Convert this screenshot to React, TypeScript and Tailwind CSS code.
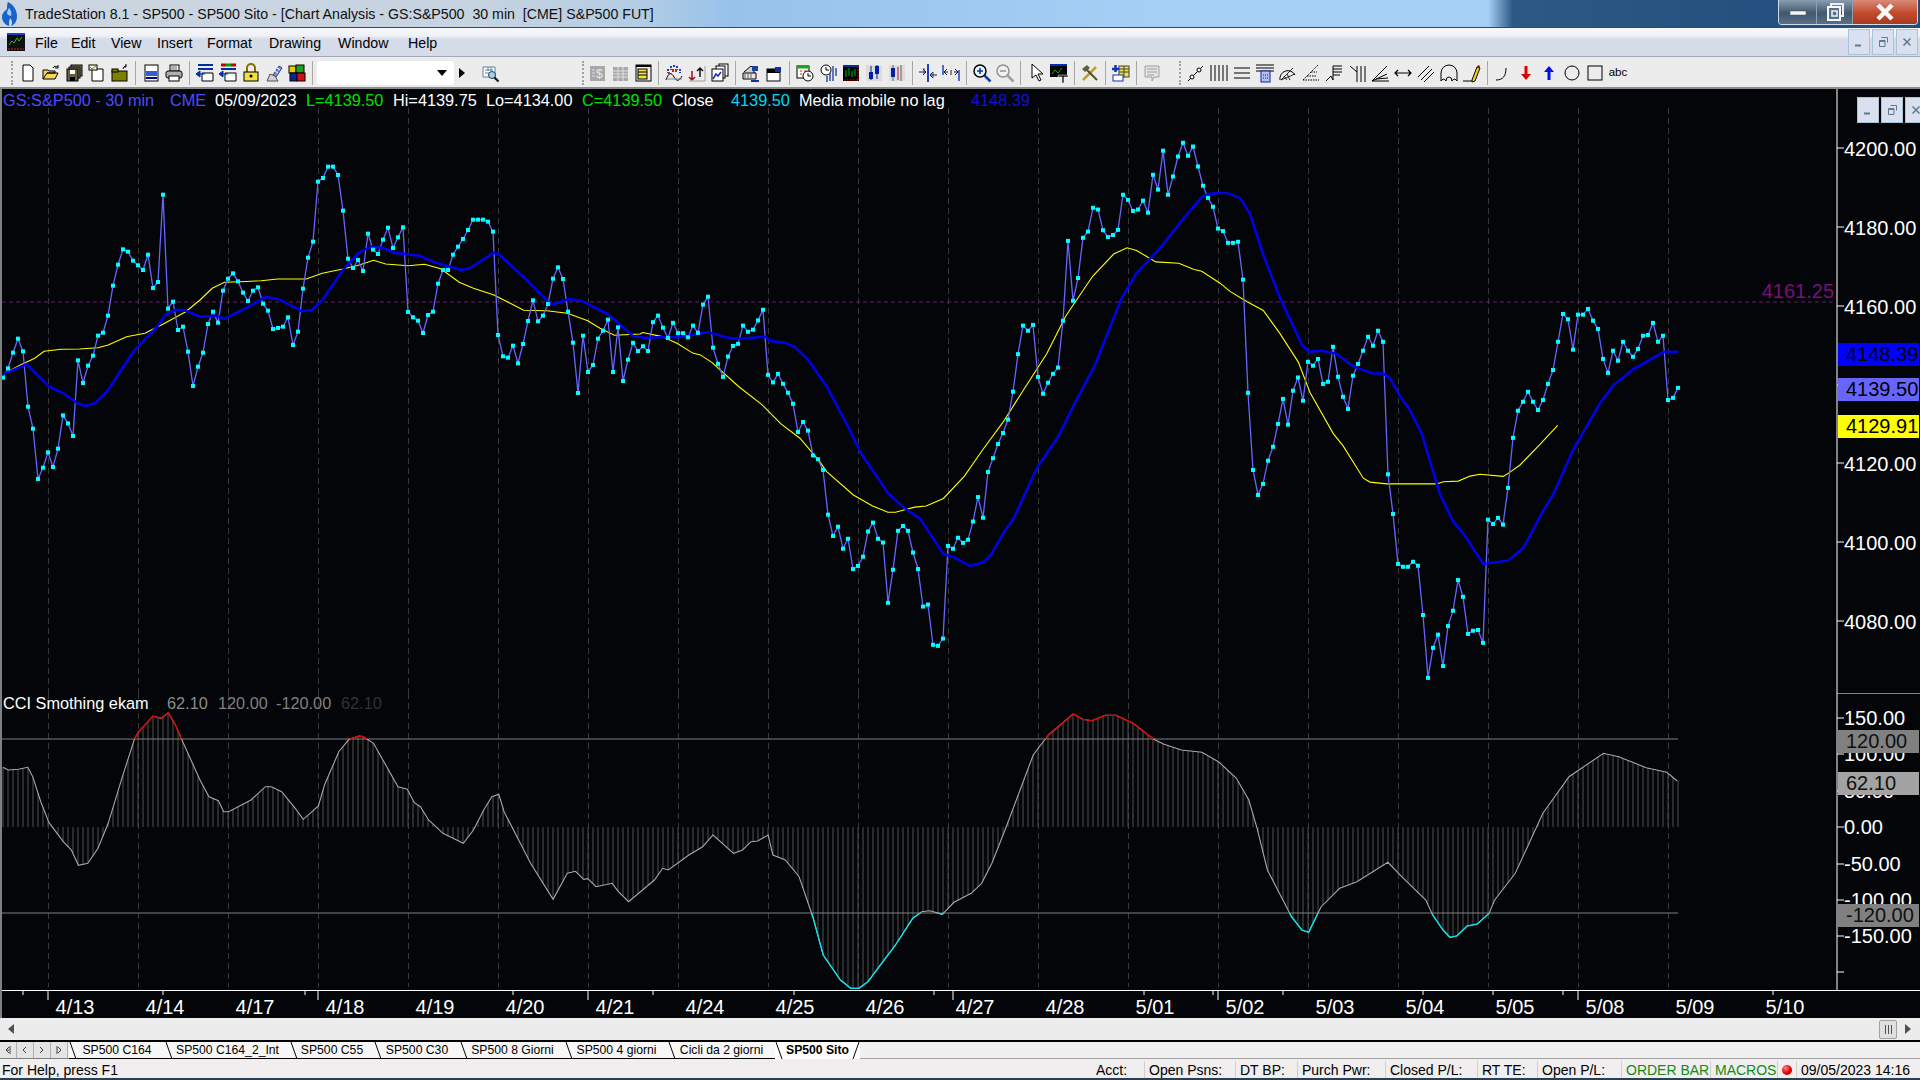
import React from "react";

const seriesA = [773,745,698,656,694,860,926,1077,1043,997,1041,986,886,910,948,721,789,737,707,647,638,587,497,434,388,395,422,436,450,404,504,486,224,566,545,630,620,695,798,740,698,612,575,608,512,476,460,484,518,543,512,502,551,572,627,624,620,592,675,635,506,413,365,185,174,140,140,165,272,416,444,420,453,341,389,402,359,323,384,352,322,576,592,602,639,585,575,491,450,450,404,380,357,330,299,299,299,305,335,645,709,713,677,730,672,603,541,604,587,552,476,442,477,575,668,819,647,756,735,656,632,599,756,622];
const seriesB = [729,667,618,642,628,642,558,539,574,604,560,590,590,602,568,589,507,484,632,679,717,658,627,621,568,586,580,553,522,711,733,708,737,763,795,877,848,873,945,956,987,1117,1179,1152,1216,1187,1275,1266,1239,1166,1140,1187,1198,1373,1277,1164,1150,1164,1227,1275,1384,1378,1495,1498,1477,1208,1216,1184,1199,1190,1137,1066,1126,993,953,912,880,841,760,651,568,583,566,717,766,734,708,690,554,322,496,430,313,295,226,231,291,311,305,290,188,203,235,231,205,240,130,173,60,188,135,77,37,75,48,106];
const seriesC = [156,190,215,276,283,316,316,313,419,736,952,1022,991,926,887,823,753,825,730,693,758,649,660,641,711,705,607,691,747,781,688,655,618,579,604,562,593,964,1075,1215,1223,1223,1209,1220,1358,1534,1450,1413,1501,1389,1346,1260,1307,1411,1402,1400,1436,1091,1103,1086,1105,1002,862,786,761,733,761,784,756,711,672,593,515,530,615,517,517,501,534,557,641,680,618,646,593,618,635,613,576,574,540,593,576,756,750,722];

const priceY = [
  ...seriesA.map((z) => 120 + z / 3),
  ...seriesB.map((z) => 130 + z / 2.904),
  ...seriesC.map((z) => 130 + z / 2.8),
];
const priceX = priceY.map((_, i) => 3 + 5 * i);
const pricePts = priceY.map((y, i) => `${priceX[i]},${y.toFixed(1)}`).join(" ");

type Pt = [number, number];

// flat list of x,y read off a crop -> real page coordinates
const crop = (flat: number[], ox: number, oy: number, sx: number, sy: number): Pt[] => {
  const out: Pt[] = [];
  for (let i = 0; i < flat.length; i += 2) out.push([ox + flat[i] / sx, oy + flat[i + 1] / sy]);
  return out;
};

const merge = (...parts: Pt[][]): Pt[] => {
  const out: Pt[] = [];
  parts.forEach((p) =>
    p.forEach((pt) => {
      if (!out.length || pt[0] > out[out.length - 1][0]) out.push(pt);
    })
  );
  return out;
};

const toAttr = (pts: Pt[]) => pts.map(([x, y]) => `${x.toFixed(1)},${y.toFixed(1)}`).join(" ");

const yellow = merge(
  crop([7,763,50,735,85,715,108,694,150,688,195,687,240,683,265,675,310,650,355,640,400,612,455,575,490,540,520,505,550,487,590,485,640,482,680,477,750,477,790,460,840,447,880,435,915,421,945,432,1000,437,1040,433,1080,446,1125,487,1160,505,1210,525,1250,550,1283,571,1340,572,1390,580,1440,602,1470,625,1505,646,1568,642], 0, 120, 2.45, 3),
  crop([60,588,110,600,150,620,190,648,210,653,240,675,310,745,370,797,420,853,470,895,520,960,540,992,610,1060,660,1092,700,1110,720,1110,770,1095,800,1092,845,1070,900,1005,950,925,1000,850,1060,745,1115,650,1165,540,1235,425,1290,360,1325,342,1350,350,1400,383,1460,387,1500,405,1520,410,1568,445], 620, 130, 2.613, 2.904),
  crop([40,420,90,452,140,480,190,505,240,570,295,650,330,735,400,850,430,885,490,975,510,986,560,991,650,991,710,991,730,985,775,983,810,969,840,964,910,970,930,958,960,938,1020,880,1073,827], 1200, 130, 3, 2.8)
);

const blue = merge(
  crop([7,763,65,733,120,800,155,820,190,850,210,858,235,848,265,810,305,735,330,690,350,665,385,620,405,585,430,570,450,570,490,590,530,587,550,596,605,563,650,531,680,536,740,574,765,570,790,540,840,450,880,397,910,380,940,384,965,398,1030,408,1060,425,1130,450,1150,445,1210,398,1225,405,1290,480,1345,548,1355,553,1395,537,1425,543,1490,583,1550,648,1568,650], 0, 120, 2.45, 3),
  crop([60,604,100,602,160,601,230,587,280,603,310,607,380,600,390,612,430,618,455,628,490,665,540,745,600,870,630,940,680,1020,700,1055,740,1095,785,1130,845,1232,870,1240,915,1266,950,1255,970,1232,1005,1165,1030,1125,1090,980,1145,890,1190,790,1240,685,1310,490,1350,415,1410,345,1470,260,1520,195,1540,185,1568,183], 620, 130, 2.613, 2.904),
  crop([25,178,80,176,120,190,150,235,190,350,240,470,305,600,325,621,365,618,410,627,460,662,520,682,550,682,570,695,600,745,630,785,665,850,720,1020,760,1097,790,1130,850,1215,925,1205,970,1170,1030,1065,1060,1020,1120,895,1200,765,1240,715,1300,670,1390,622,1435,621], 1200, 130, 3, 2.8)
);

const cci = merge(
  crop([7,262,20,270,45,268,68,262,80,290,100,365,120,428,155,485,175,510,192,556,215,550,240,505,265,430,300,290,330,175,340,155,375,108,395,115,412,98,430,135,445,178,490,300,512,350,535,362,548,395,560,395,615,360,650,320,665,320,690,335,720,380,743,418,780,378,795,315,830,215,855,178,880,168,890,170,900,178,915,190,975,320,998,328,1015,368,1030,380,1050,420,1085,460,1135,490,1160,450,1185,390,1205,350,1222,343,1235,395,1300,550,1355,658,1390,580,1410,574,1430,598,1440,596,1460,620,1500,610,1515,635,1540,665], 0, 680, 2.45, 3),
  crop([50,540,62,505,70,510,100,465,120,440,135,405,165,460,178,450,190,425,200,423,215,405,222,465,240,480,260,530,280,650,295,765,320,840,335,865,347,865,360,845,400,735,425,655,438,635,450,632,468,643,485,607,510,580,525,550,540,490,560,385,600,165,622,105,658,42,672,58,685,62,705,46,720,46,745,70,775,118,790,133,815,150,845,157,870,187,895,235,913,300,925,385,940,510,975,650,990,690,1000,697,1018,620,1045,565,1070,545,1115,487,1135,530,1170,600,1180,645,1195,690,1205,712,1215,708,1230,678,1245,672,1262,640,1270,600,1300,520,1340,340,1378,230,1428,160,1450,170,1490,203,1520,217,1535,243], 620, 700, 1.452, 3)
);

const cciAt = (x: number) => {
  for (let i = 1; i < cci.length; i++) {
    if (x <= cci[i][0]) {
      const [x0, y0] = cci[i - 1];
      const [x1, y1] = cci[i];
      return y0 + ((y1 - y0) * (x - x0)) / (x1 - x0);
    }
  }
  return cci[cci.length - 1][1];
};

const gridX = Array.from({ length: 19 }, (_, i) => 48.5 + 90 * i);
const days = ["4/13","4/14","4/17","4/18","4/19","4/20","4/21","4/24","4/25","4/26","4/27","4/28","5/01","5/02","5/03","5/04","5/05","5/08","5/09","5/10"];

const priceTicks = [
  { y: 148, t: "4200.00" },
  { y: 227, t: "4180.00" },
  { y: 306, t: "4160.00" },
  { y: 385, t: "" },
  { y: 463, t: "4120.00" },
  { y: 542, t: "4100.00" },
  { y: 621, t: "4080.00" },
];
const flags = [
  { y: 343, t: "4148.39", bg: "#0000ff" },
  { y: 378, t: "4139.50", bg: "#6666ff" },
  { y: 415, t: "4129.91", bg: "#ffff00" },
];
const cciTicks = [
  { y: 718, t: "150.00" },
  { y: 754, t: "100.00" },
  { y: 791, t: "50.00" },
  { y: 827, t: "0.00" },
  { y: 864, t: "-50.00" },
  { y: 900, t: "-100.00" },
  { y: 936, t: "-150.00" },
  { y: 972, t: "" },
];
const cciFlags = [
  { y: 730, t: "120.00", bg: "#808080" },
  { y: 772, t: "62.10", bg: "#a3a3a3" },
  { y: 904, t: "-120.00", bg: "#808080" },
];

const smallTicks = [23, 163, 305, 513, 653, 794, 934, 1144, 1213, 1283, 1423, 1493, 1563, 1773];
const longTicks = [48, 318, 588, 953, 1218, 1578];

const SVGFONT = "'Liberation Sans', Arial, sans-serif";

const icons: Record<string, React.ReactNode> = {
  newDoc: <path d="M5 2h7l3 3v13H5z" fill="#fff" stroke="#000" />,
  open: (
    <>
      <path d="M2 16V7h5l1 1h6v2H6l-4 6h12l3-6H6" fill="#f5d860" stroke="#000" />
      <path d="M12 5c1-2 3-2 5-1M17 2v3h-3" fill="none" stroke="#000" />
    </>
  ),
  saveAll: (
    <>
      <rect x="7" y="2" width="11" height="11" fill="#808060" stroke="#000" />
      <rect x="5" y="4" width="11" height="11" fill="#808060" stroke="#000" />
      <rect x="3" y="6" width="11" height="12" fill="#606040" stroke="#000" />
      <rect x="6" y="7" width="5" height="4" fill="#fff" />
      <rect x="6" y="14" width="5" height="4" fill="#000" />
    </>
  ),
  docCheck: (
    <>
      <path d="M5 6h11v12H5z" fill="#fff" stroke="#000" />
      <rect x="2" y="2" width="8" height="5" fill="#ffe" stroke="#000" />
      <path d="M3 4l2 2 4-3" fill="none" stroke="#808000" />
    </>
  ),
  oliveBox: (
    <>
      <rect x="2" y="8" width="15" height="10" fill="#808000" stroke="#000" />
      <rect x="2" y="6" width="6" height="3" fill="#808000" stroke="#000" />
      <path d="M13 6c0-2 2-3 3-3M16 1v3h-2" fill="none" stroke="#000" />
    </>
  ),
  preview: (
    <>
      <rect x="4" y="2" width="13" height="16" fill="#fff" stroke="#000" />
      <rect x="5" y="8" width="11" height="5" fill="#3060d0" />
      <path d="M5 15h11" stroke="#000080" strokeWidth="2" />
    </>
  ),
  printer: (
    <>
      <rect x="6" y="2" width="9" height="6" fill="#fff" stroke="#000" />
      <rect x="2" y="8" width="16" height="7" rx="2" fill="#b0b0b0" stroke="#000" />
      <rect x="5" y="13" width="10" height="5" fill="#fff" stroke="#000" />
      <path d="M7 4h6M7 6h6" stroke="#666" />
    </>
  ),
  winA: (
    <>
      <path d="M3 2h15M3 6h15" stroke="#0030a0" strokeWidth="2" />
      <path d="M7 10h11v8H7z" fill="#fff" stroke="#000" />
      <path d="M1 11l4-3v6zM5 11h5" fill="#0030a0" stroke="#0030a0" />
    </>
  ),
  winB: (
    <>
      <path d="M3 2h5" stroke="#d00000" strokeWidth="3" />
      <path d="M8 2h5" stroke="#00a000" strokeWidth="3" />
      <path d="M13 2h5" stroke="#d00000" strokeWidth="3" />
      <path d="M3 6h15" stroke="#0030a0" strokeWidth="2" />
      <path d="M7 10h11v8H7z" fill="#fff" stroke="#000" />
      <path d="M1 11l4-3v6zM5 11h5" fill="#0030a0" stroke="#0030a0" />
    </>
  ),
  lock: (
    <>
      <path d="M6 9V5a4 4 0 018 0v4" fill="none" stroke="#807000" strokeWidth="2" />
      <rect x="3" y="9" width="14" height="9" fill="#f0e040" stroke="#000" />
      <circle cx="10" cy="13" r="1.5" fill="#000" />
    </>
  ),
  hatch: (
    <>
      <path d="M9 12l6-9 3 2-6 9z" fill="#8090d0" stroke="#304090" />
      <path d="M3 18l3-7 5 2 3 5z" fill="#d0d0d0" stroke="#505050" />
      <path d="M11 8l3 2M13 5l3 2" stroke="#fff" />
    </>
  ),
  cubes: (
    <>
      <rect x="2" y="3" width="7" height="7" fill="#e8d000" stroke="#000" />
      <rect x="9" y="2" width="8" height="8" fill="#20a020" stroke="#000" />
      <rect x="3" y="10" width="7" height="8" fill="#1020a0" stroke="#000" />
      <rect x="10" y="10" width="8" height="8" fill="#d01010" stroke="#000" />
    </>
  ),
  finder: (
    <>
      <path d="M3 4h12v10H3z" fill="#fff" stroke="#6080a0" />
      <path d="M5 7h8M5 10h5M8 4v4M11 4v4" stroke="#6080a0" />
      <circle cx="12" cy="12" r="3.5" fill="#a0d0f0" stroke="#304050" />
      <path d="M14.5 14.5l4 4" stroke="#000" strokeWidth="2" />
    </>
  ),
  grayCalc: (
    <>
      <rect x="3" y="3" width="15" height="15" fill="#a8a8a8" />
      <path d="M5 7h3M5 10h3M5 13h3" stroke="#e0e0e0" />
      <text x="9" y="15" fontSize="12" fontFamily={SVGFONT} fill="#e8e8e8">$</text>
    </>
  ),
  grayTable: (
    <>
      <rect x="3" y="4" width="15" height="14" fill="#a8a8a8" />
      <path d="M3 8h15M3 11h15M3 14h15M8 4v14M13 4v14" stroke="#e0e0e0" />
    </>
  ),
  yellowTable: (
    <>
      <rect x="3" y="2" width="15" height="16" fill="#f0f0f0" stroke="#000" />
      <rect x="5" y="6" width="9" height="10" fill="#f0e050" stroke="#000" />
      <path d="M5 9h9M5 12h9" stroke="#000" />
      <path d="M3 3h15" stroke="#000" strokeWidth="2" />
    </>
  ),
  wave: (
    <>
      <path d="M2 17c3-8 5-8 8-3s5 4 8-1" fill="none" stroke="#000" />
      <path d="M2 16h16" stroke="#808080" />
      <path d="M4 6v4M7 3v4M10 2v3M13 3v4M16 6v4" stroke="#2040d0" strokeWidth="2" strokeDasharray="2 1" />
      <path d="M5 9v2M9 6v3M12 6v3" stroke="#d02020" strokeWidth="2" />
    </>
  ),
  arrows: (
    <>
      <path d="M5 8v9M2 14l3 3 3-3" fill="none" stroke="#a01010" strokeWidth="1.5" />
      <path d="M13 14V5M10 8l3-3 3 3" fill="none" stroke="#101010" strokeWidth="1.5" />
      <path d="M2 18h16M18 3v15" stroke="#a0a0a0" />
    </>
  ),
  stack: (
    <>
      <rect x="9" y="1" width="9" height="12" fill="#fff" stroke="#000" />
      <rect x="6" y="3" width="9" height="12" fill="#fff" stroke="#000" />
      <rect x="2" y="6" width="11" height="12" fill="#fff" stroke="#000" />
      <path d="M3 16l3-5 2 2 3-4" fill="none" stroke="#1030c0" strokeWidth="1.5" />
    </>
  ),
  chartUp: (
    <>
      <path d="M3 9l7-6 3 3v4" fill="#d0d0d0" stroke="#000" />
      <path d="M2 10h13v6H2z" fill="#e8e8e8" stroke="#000" />
      <path d="M4 10v5M7 10v5M10 10v5" stroke="#606060" />
      <path d="M11 3h6v5h-6z" fill="#2040a0" />
      <path d="M10 18h8" stroke="#1030a0" strokeWidth="2" />
    </>
  ),
  winUp: (
    <>
      <rect x="3" y="6" width="13" height="12" fill="#fff" stroke="#000" />
      <path d="M3 8h13" stroke="#000" strokeWidth="4" />
      <path d="M11 4h6v5h-6z" fill="#1030a0" />
    </>
  ),
  calClock: (
    <>
      <rect x="2" y="3" width="12" height="12" fill="#fff" stroke="#000" />
      <path d="M2 4h12" stroke="#20a020" strokeWidth="3" />
      <path d="M5 8h2M9 8h2M5 11h2" stroke="#d02020" />
      <circle cx="13" cy="13" r="5" fill="#fff" stroke="#000" />
      <path d="M13 10v3h3" fill="none" stroke="#000" />
    </>
  ),
  clockBars: (
    <>
      <circle cx="8" cy="7" r="5" fill="#fff" stroke="#000" />
      <path d="M8 4v3h3" fill="none" stroke="#000" />
      <path d="M15 3v15M18 5v8M9 13v6M12 10v8" stroke="#3050a0" strokeWidth="1.5" />
    </>
  ),
  blackChart: (
    <>
      <rect x="2" y="2" width="16" height="16" fill="#000" />
      <path d="M5 7v7M8 5v8M11 8v6M14 6v7" stroke="#00c000" />
      <path d="M2 3h16" stroke="#0030a0" strokeWidth="2" />
      <path d="M17 3v15M3 17h15" stroke="#e00000" strokeDasharray="2 1" />
    </>
  ),
  candles: (
    <>
      <rect x="2" y="2" width="16" height="16" fill="#dcdcdc" />
      <path d="M7 3v14M13 2v14" stroke="#0020a0" />
      <rect x="5" y="9" width="4" height="7" fill="#0020a0" />
      <rect x="11" y="3" width="4" height="8" fill="#0020a0" />
    </>
  ),
  bars: (
    <>
      <rect x="2" y="2" width="16" height="16" fill="#dcdcdc" />
      <path d="M6 2v16M14 2v16" stroke="#606060" />
      <rect x="4" y="5" width="4" height="9" fill="#0020a0" />
      <path d="M11 4v13" stroke="#c01010" />
    </>
  ),
  arrowIn: (
    <>
      <path d="M10 1v18" stroke="#2040c0" strokeWidth="2" />
      <path d="M1 9h7M5 6l3 3-3 3M19 12h-7M15 9l-3 3 3 3" fill="none" stroke="#202020" />
      <path d="M6 5v6M15 9v6" stroke="#2040c0" />
    </>
  ),
  arrowOut: (
    <>
      <path d="M2 2v10M18 7v11" stroke="#2040c0" strokeWidth="1.5" />
      <path d="M3 9h4M6 6l-3 3 3 3M17 9h-4M14 6l3 3-3 3" fill="none" stroke="#202020" />
      <path d="M10 7v5" stroke="#202020" />
    </>
  ),
  zoomIn: (
    <>
      <circle cx="8" cy="8" r="6" fill="#e8f4ff" stroke="#000" strokeWidth="1.5" />
      <path d="M5 8h6M8 5v6" stroke="#1030a0" strokeWidth="1.5" />
      <path d="M12.5 12.5l6 6" stroke="#1040a0" strokeWidth="2.5" />
    </>
  ),
  zoomOut: (
    <>
      <circle cx="8" cy="8" r="6" fill="#f0f0f0" stroke="#909090" strokeWidth="1.5" />
      <path d="M5 8h6" stroke="#909090" strokeWidth="1.5" />
      <path d="M12.5 12.5l6 6" stroke="#a0a0a0" strokeWidth="2.5" />
    </>
  ),
  cursor: <path d="M6 1v14l4-3 3 6 2-1-3-6h5z" fill="#fff" stroke="#000" />,
  textChart: (
    <>
      <rect x="1" y="1" width="17" height="13" fill="#000" />
      <path d="M1 2h17" stroke="#0030c0" strokeWidth="2" />
      <path d="M3 11l3-4 3 3 4-5" fill="none" stroke="#00c000" />
      <path d="M9 12h10v2h-4v6h-2v-6H9z" fill="#202020" stroke="#fff" strokeWidth=".5" />
    </>
  ),
  tools: (
    <>
      <path d="M3 17L16 4" stroke="#c0a020" strokeWidth="2.5" />
      <path d="M17 17L5 5" stroke="#505030" strokeWidth="2" />
      <path d="M2 6l5-4 3 3-5 4z" fill="#606040" />
    </>
  ),
  plusTable: (
    <>
      <rect x="8" y="3" width="10" height="11" fill="#f0e050" stroke="#404040" />
      <path d="M8 6h10M8 9h10M13 3v11" stroke="#404040" />
      <path d="M1 6h7M4.500 2v7" stroke="#1030c0" strokeWidth="2.500" />
      <rect x="2" y="12" width="10" height="6" fill="#fff" stroke="#1030a0" />
    </>
  ),
  grayNote: (
    <>
      <path d="M3 3h14v11h-5l-2 4v-4H3z" fill="#e4e4e4" stroke="#a0a0a0" />
      <path d="M5 6h10M5 9h10M5 12h7" stroke="#a0a0a0" />
    </>
  ),
  trend: (
    <>
      <path d="M2 18L17 3" stroke="#000" />
      <circle cx="6" cy="14" r="2" fill="#fff" stroke="#000" />
      <circle cx="13" cy="7" r="2" fill="#fff" stroke="#000" />
    </>
  ),
  vlines: <path d="M2 2v16M6 2v16M10 2v16M14 2v16M18 2v16" stroke="#000" />,
  hlines: <path d="M2 5h16M2 10h16M2 15h16" stroke="#000" />,
  calcLines: (
    <>
      <path d="M1 2h18M1 5h18M1 8h18" stroke="#000" />
      <rect x="6" y="8" width="9" height="11" fill="#b0c0f0" stroke="#1020a0" />
      <path d="M8 12h5M8 15h5" stroke="#1020a0" strokeDasharray="1 1" />
    </>
  ),
  arcFan: (
    <>
      <path d="M2 17a8 8 0 0115-5" fill="none" stroke="#000" />
      <path d="M3 17L15 5M3 17l14-6M6 13l3 4M9 11l3 6" stroke="#000" strokeWidth=".8" />
    </>
  ),
  dotTri: (
    <>
      <path d="M2 17L17 2" stroke="#000" strokeDasharray="1.500 1" />
      <path d="M2 17h16M6 13h10M10 9h6" stroke="#000" strokeDasharray="1.500 1" />
    </>
  ),
  steps: (
    <>
      <path d="M2 18l5-5 2 4" fill="none" stroke="#000" />
      <path d="M9 17V3M9 3h9M9 6h9M9 9h9M9 12h7" stroke="#000" />
    </>
  ),
  vfan: <path d="M3 3l7 6M10 3v16M14 3v16M18 3v16" stroke="#000" />,
  angle: (
    <>
      <path d="M2 18L17 3M2 18h17M2 18l15-7M6 16l12-1" stroke="#000" />
    </>
  ),
  measure: <path d="M2 10h16M5 7l-3 3 3 3M15 7l3 3-3 3" fill="none" stroke="#000" strokeWidth="1.200" />,
  parallel: <path d="M2 14L13 3M5 17L16 6M8 19L18 9" stroke="#000" />,
  dome: (
    <>
      <path d="M2 18V10a8 8 0 0116 0v8" fill="none" stroke="#000" />
      <path d="M2 18a3 4 0 015 0a3 4 0 016 0a3 4 0 015 0" fill="none" stroke="#000" />
    </>
  ),
  pencil: (
    <>
      <path d="M1 18h9" stroke="#000" />
      <path d="M10 17l5-13 3 1-5 13-3 1z" fill="#f0d020" stroke="#000" />
      <path d="M15 4l1-2 2 1-.500 2z" fill="#a01010" />
    </>
  ),
  curve: <path d="M3 17c7 0 10-4 10-12" fill="none" stroke="#000" />,
  arrowDown: <path d="M8.500 3h3v8H15l-5 6-5-6h3.500z" fill="#e00000" />,
  arrowUp: <path d="M8.500 17h3V9H15l-5-6-5 6h3.500z" fill="#0010f0" />,
  circle: <circle cx="10" cy="10" r="7" fill="none" stroke="#000" />,
  square: <rect x="3" y="3" width="14" height="14" fill="none" stroke="#000" />,
};

const Icon = ({ name }: { name: string }) => (
  <div className="flex h-[23px] w-[23px] shrink-0 items-center justify-center">
    <svg viewBox="0 0 20 20" className="h-[20px] w-[20px]">
      {icons[name]}
    </svg>
  </div>
);

const Sep = () => (
  <div className="flex w-[8px] shrink-0 justify-center">
    <div className="h-[24px] w-px bg-[#a8a8a8]" />
  </div>
);

const Grip = ({ className }: { className: string }) => (
  <div className={`h-[24px] w-[2px] shrink-0 border-l-2 border-dotted border-[#a0a0a0] ${className}`} />
);

const Group = ({ items }: { items: string[] }) => (
  <>
    {items.map((n) => (
      <Icon key={n} name={n} />
    ))}
  </>
);

const WinBtn = ({ kind }: { kind: "min" | "max" | "close" }) => (
  <div className="flex h-[26px] w-[22px] shrink-0 items-center justify-center border border-[#a9c4da] bg-[#d9e1f1]">
    <svg viewBox="0 0 12 12" className="h-[12px] w-[12px]">
      {kind === "min" && <path d="M2 9.500h6" stroke="#607890" strokeWidth="2" />}
      {kind === "max" && (
        <path d="M4.500 1.500h6v5M2.500 4.500h5.500v6H2.500zM2.500 5.500h5.500" fill="none" stroke="#607890" />
      )}
      {kind === "close" && <path d="M2.500 2.500l7 7M9.500 2.500l-7 7" stroke="#607890" strokeWidth="1.500" />}
    </svg>
  </div>
);

const tabs = [
  { t: "SP500 C164", w: "w-[96px]" },
  { t: "SP500 C164_2_Int", w: "w-[125px]" },
  { t: "SP500 C55", w: "w-[84px]" },
  { t: "SP500 C30", w: "w-[86px]" },
  { t: "SP500 8 Giorni", w: "w-[105px]" },
  { t: "SP500 4 giorni", w: "w-[103px]" },
  { t: "Cicli da 2 giorni", w: "w-[107px]" },
];

const status = [
  { t: "Open Psns:", w: "w-[91px]", c: "" },
  { t: "DT BP:", w: "w-[62px]", c: "" },
  { t: "Purch Pwr:", w: "w-[88px]", c: "" },
  { t: "Closed P/L:", w: "w-[92px]", c: "" },
  { t: "RT TE:", w: "w-[60px]", c: "" },
  { t: "Open P/L:", w: "w-[84px]", c: "" },
  { t: "ORDER BAR", w: "w-[89px]", c: "text-[#158a15]" },
  { t: "MACROS", w: "w-[67px]", c: "text-[#158a15]" },
];

export default function App() {
  return (
    <div className="flex h-[1080px] w-[1920px] flex-col overflow-hidden bg-[#f0f0f0] font-['Liberation_Sans',Arial,sans-serif] text-black">
      {/* title bar */}
      <div className="flex h-[28px] shrink-0 items-center justify-between border-b border-[#38485a] bg-[linear-gradient(90deg,#ccd6e0_0%,#c6d3e0_25%,#b4cde4_33%,#98c2ea_38%,#a6cff6_60%,#a6cff6_77.500%,#2b5884_78.800%,#204c7c_100%)]">
        <div className="flex items-center">
          <svg viewBox="0 0 18 26" className="ml-[1px] h-[26px] w-[18px]">
            <path d="M7 1c5 2 9 8 9 14s-3 9-6 10c2-3 1-6-1-8-1 3-1 5-1 8-4-1-7-5-7-9s3-6 5-8c0-3 0-5 1-7z" fill="#1a62c8" />
            <path d="M8 7c2 2 3 5 2 8-2-1-4-1-4-3s1-3 2-5z" fill="#9cd0f8" />
          </svg>
          <span className="ml-[6px] whitespace-pre pt-[2px] text-[14.200px] leading-none text-[#101010]">
            TradeStation 8.1 - SP500 - SP500 Sito - [Chart Analysis - GS:S&amp;P500  30 min  [CME] S&amp;P500 FUT]
          </span>
        </div>
        <div className="mr-[2px] flex h-[25px] self-start overflow-hidden rounded-b-[4px] border border-t-0 border-[#d0dce8]">
          <div className="flex w-[38px] items-center justify-center border-r border-[#8aa0b4] bg-[linear-gradient(180deg,#8a9cb0,#42586e_55%,#5a7088)]">
            <svg viewBox="0 0 18 10" className="w-[18px]"><rect x="1" y="4" width="16" height="4" fill="#f4f6f8" stroke="#405060" strokeWidth=".500" /></svg>
          </div>
          <div className="flex w-[36px] items-center justify-center border-r border-[#8aa0b4] bg-[linear-gradient(180deg,#8a9cb0,#42586e_55%,#5a7088)]">
            <svg viewBox="0 0 18 18" className="h-[18px] w-[18px]">
              <rect x="5" y="1" width="12" height="12" fill="none" stroke="#e8eef4" strokeWidth="2" />
              <rect x="2" y="4" width="12" height="13" fill="#5a7088" stroke="#f4f6f8" strokeWidth="2" />
              <rect x="6" y="8" width="5" height="5" fill="none" stroke="#f4f6f8" strokeWidth="1.500" />
            </svg>
          </div>
          <div className="flex w-[64px] items-center justify-center bg-[linear-gradient(180deg,#d98a78,#c24a2c_55%,#a83a20)]">
            <svg viewBox="0 0 20 18" className="h-[18px] w-[20px]">
              <path d="M3 2l14 14M17 2L3 16" stroke="#f8f8f8" strokeWidth="4.500" />
            </svg>
          </div>
        </div>
      </div>

      {/* menu */}
      <div className="flex h-[29px] shrink-0 items-center border-b border-[#a4a8b4] bg-[linear-gradient(180deg,#f7f8fb_0%,#eff1f7_28%,#d6dbea_40%,#d6dbea_100%)]">
        <svg viewBox="0 0 18 18" className="ml-[7px] h-[18px] w-[18px]">
          <rect width="18" height="18" fill="#101010" />
          <path d="M0 1h18" stroke="#2040c0" strokeWidth="2" />
          <path d="M2 12l3-4 2 2 3-5 2 3 3-4" fill="none" stroke="#20c020" />
          <path d="M1 16h16" stroke="#d02020" strokeDasharray="2 1" />
        </svg>
        <div className="ml-[10px] flex pt-[2px] text-[14.200px] leading-none">
          <span className="w-[36px]">File</span>
          <span className="w-[40px]">Edit</span>
          <span className="w-[46px]">View</span>
          <span className="w-[50px]">Insert</span>
          <span className="w-[62px]">Format</span>
          <span className="w-[69px]">Drawing</span>
          <span className="w-[70px]">Window</span>
          <span>Help</span>
        </div>
        <div className="ml-auto mr-[2px] flex gap-[2px]">
          <WinBtn kind="min" />
          <WinBtn kind="max" />
          <WinBtn kind="close" />
        </div>
      </div>

      {/* toolbar */}
      <div className="flex h-[32px] shrink-0 items-center border-b-2 border-[#8c8c8c] bg-[#ececec] pl-[11px] pt-[2px]">
        <Grip className="mr-[3.500px]" />
        <Group items={["newDoc", "open", "saveAll", "docCheck", "oliveBox"]} />
        <Sep />
        <Group items={["preview", "printer"]} />
        <Sep />
        <Group items={["winA", "winB", "lock", "hatch", "cubes"]} />
        <Sep />
        <div className="flex h-[24px] w-[137px] shrink-0 items-center justify-end rounded-[3px] bg-white pr-[7px]">
          <svg viewBox="0 0 10 6" className="w-[10px]"><path d="M0 0h10L5 6z" fill="#000" /></svg>
        </div>
        <div className="flex w-[16px] shrink-0 justify-center">
          <svg viewBox="0 0 6 10" className="h-[10px] w-[6px]"><path d="M0 0v10l6-5z" fill="#000" /></svg>
        </div>
        <div className="ml-[9px]"><Icon name="finder" /></div>
        <Grip className="ml-[80px] mr-[2px]" />
        <Group items={["grayCalc", "grayTable", "yellowTable"]} />
        <Sep />
        <Group items={["wave", "arrows", "stack"]} />
        <Sep />
        <Group items={["chartUp", "winUp"]} />
        <Sep />
        <Group items={["calClock", "clockBars", "blackChart", "candles", "bars"]} />
        <Sep />
        <Group items={["arrowIn", "arrowOut"]} />
        <Sep />
        <Group items={["zoomIn", "zoomOut"]} />
        <Sep />
        <Group items={["cursor", "textChart"]} />
        <Sep />
        <Group items={["tools"]} />
        <Sep />
        <Group items={["plusTable"]} />
        <Sep />
        <Group items={["grayNote"]} />
        <Grip className="ml-[15px] mr-[4px]" />
        <Group items={["trend", "vlines", "hlines", "calcLines", "arcFan", "dotTri", "steps", "vfan", "angle", "measure", "parallel", "dome", "pencil"]} />
        <Sep />
        <Group items={["curve", "arrowDown", "arrowUp", "circle", "square"]} />
        <span className="w-[23px] text-center text-[11.500px] leading-none">abc</span>
      </div>

      {/* chart */}
      <div className="flex h-[929px] shrink-0 flex-col overflow-hidden border-l-2 border-[#808080] bg-[#030508] text-white">
        <div className="relative h-[604px] shrink-0">
          <svg viewBox="2 89 1918 604" className="absolute inset-0 h-full w-full">
            {gridX.map((x) => (
              <line key={x} x1={x} x2={x} y1={108} y2={693} stroke="#383838" strokeDasharray="6 4" />
            ))}
            <line x1={2} x2={1836} y1={302} y2={302} stroke="#6c1a6c" strokeDasharray="4 3" />
            <text x={1834} y={298} textAnchor="end" fontSize={20} fontFamily={SVGFONT} fill="#7a107a">4161.25</text>
            <polyline points={toAttr(yellow)} fill="none" stroke="#ffff00" strokeWidth={1.100} />
            <polyline points={pricePts} fill="none" stroke="#6666ff" strokeWidth={1.300} />
            <polyline points={toAttr(blue)} fill="none" stroke="#0000f0" strokeWidth={2.500} />
            {priceY.map((y, i) => (
              <rect key={i} x={priceX[i] - 2} y={y - 2} width={4} height={4} fill="#00ffff" />
            ))}
            <line x1={1837} x2={1837} y1={89} y2={693} stroke="#fff" />
            {priceTicks.map((p) => (
              <g key={p.y}>
                <line x1={1837} x2={1844} y1={p.y} y2={p.y} stroke="#fff" />
                <text x={1844} y={p.y + 8} fontSize={20} fontFamily={SVGFONT} fill="#fff">{p.t}</text>
              </g>
            ))}
            {flags.map((f) => (
              <g key={f.y}>
                <rect x={1838} y={f.y} width={81} height={23} fill={f.bg} />
                <text x={1846} y={f.y + 18} fontSize={20} fontFamily={SVGFONT} fill="#000">{f.t}</text>
              </g>
            ))}
          </svg>
          <div className="absolute left-[1px] top-0 flex whitespace-nowrap text-[16.300px] leading-[22px]">
            <span className="w-[167px] text-[#4b4bff]">GS:S&amp;P500 - 30 min</span>
            <span className="w-[45px] text-[#4b4bff]">CME</span>
            <span className="w-[91px]">05/09/2023</span>
            <span className="w-[87px] text-[#00e000]">L=4139.50</span>
            <span className="w-[93px]">Hi=4139.75</span>
            <span className="w-[96px]">Lo=4134.00</span>
            <span className="w-[90px] text-[#00e000]">C=4139.50</span>
            <span className="w-[59px]">Close</span>
            <span className="w-[68px] text-[#00d8f0]">4139.50</span>
            <span className="w-[172px]">Media mobile no lag</span>
            <span className="text-[#1010d8]">4148.39</span>
          </div>
          <div className="absolute right-[-7px] top-[8px] flex gap-[2px]">
            <WinBtn kind="min" />
            <WinBtn kind="max" />
            <WinBtn kind="close" />
          </div>
        </div>

        <div className="relative h-[297px] shrink-0">
          <svg viewBox="2 693 1918 297" className="absolute inset-0 h-full w-full">
            <defs>
              <clipPath id="above"><rect x={0} y={693} width={1920} height={46} /></clipPath>
              <clipPath id="below"><rect x={0} y={913} width={1920} height={77} /></clipPath>
            </defs>
            {gridX.map((x) => (
              <line key={x} x1={x} x2={x} y1={693} y2={987} stroke="#383838" strokeDasharray="6 4" />
            ))}
            {priceX.map((x) => (
              <line key={x} x1={x} x2={x} y1={827} y2={cciAt(x)} stroke="#505050" />
            ))}
            <line x1={2} x2={1678} y1={739} y2={739} stroke="#808080" strokeWidth={1.200} />
            <line x1={2} x2={1678} y1={913} y2={913} stroke="#808080" strokeWidth={1.200} />
            <polyline points={toAttr(cci)} fill="none" stroke="#a8a8a8" strokeWidth={1.100} />
            <polyline points={toAttr(cci)} fill="none" stroke="#e00000" strokeWidth={1.300} clipPath="url(#above)" />
            <polyline points={toAttr(cci)} fill="none" stroke="#00e8f0" strokeWidth={1.300} clipPath="url(#below)" />
            <line x1={1837} x2={1837} y1={693} y2={990} stroke="#fff" />
            <line x1={1837} x2={1920} y1={693} y2={693} stroke="#fff" />
            {cciTicks.map((p) => (
              <g key={p.y}>
                <line x1={1837} x2={1844} y1={p.y} y2={p.y} stroke="#fff" />
                <text x={1844} y={p.y + 7} fontSize={20} fontFamily={SVGFONT} fill="#fff">{p.t}</text>
              </g>
            ))}
            {cciFlags.map((f) => (
              <g key={f.y}>
                <rect x={1838} y={f.y} width={81} height={23} fill={f.bg} />
                <text x={1846} y={f.y + 18} fontSize={20} fontFamily={SVGFONT} fill="#101010">{f.t}</text>
              </g>
            ))}
          </svg>
          <div className="absolute left-[1px] top-0 flex whitespace-nowrap text-[16.300px] leading-[20px]">
            <span className="w-[164px]">CCI Smothing ekam</span>
            <span className="w-[51px] text-[#8c8c8c]">62.10</span>
            <span className="w-[58px] text-[#808080]">120.00</span>
            <span className="w-[65px] text-[#808080]">-120.00</span>
            <span className="text-[#333333]">62.10</span>
          </div>
        </div>

        <div className="relative h-[28px] shrink-0 border-t border-white">
          <svg viewBox="2 991 1918 27" className="absolute inset-0 h-full w-full">
            {smallTicks.map((x) => (
              <line key={x} x1={x} x2={x} y1={991} y2={995} stroke="#fff" />
            ))}
            {longTicks.map((x) => (
              <line key={x} x1={x} x2={x} y1={991} y2={1000} stroke="#fff" />
            ))}
          </svg>
          <div className="relative flex pl-[28px] pt-[5px] text-[20px] leading-[22px]">
            {days.map((d) => (
              <span key={d} className="w-[90px] text-center">{d}</span>
            ))}
          </div>
        </div>
      </div>

      {/* scroll bar */}
      <div className="flex h-[22px] shrink-0 items-center justify-between bg-[#ececec]">
        <svg viewBox="0 0 6 10" className="ml-[8px] h-[10px] w-[6px]"><path d="M6 0v10L0 5z" fill="#505050" /></svg>
        <div className="flex items-center">
          <div className="flex h-[19px] w-[18px] items-center justify-center gap-[2px] rounded-[2px] border border-[#a0a0a0] bg-[#e0e0e0]">
            <div className="h-[9px] w-px bg-[#505050]" />
            <div className="h-[9px] w-px bg-[#505050]" />
            <div className="h-[9px] w-px bg-[#505050]" />
          </div>
          <svg viewBox="0 0 6 10" className="ml-[8px] mr-[9px] h-[10px] w-[6px]"><path d="M0 0v10l6-5z" fill="#505050" /></svg>
        </div>
      </div>

      {/* sheet tabs */}
      <div className="flex h-[19px] shrink-0 border-t-2 border-black bg-[#f0f0f0]">
        <div className="flex w-[69px] shrink-0 border-b border-[#808080]">
          {["M7 1v8M6 5l-3 0M6 2L3 5l3 3", "M6 2L3 5l3 3", "M3 2l3 3-3 3", "M3 1v8M4 2l3 3-3 3"].map((d) => (
            <div key={d} className="flex w-[17px] items-center justify-center border-r border-[#b0b0b0] bg-[#e4e4e4]">
              <svg viewBox="0 0 10 10" className="h-[10px] w-[10px]"><path d={d} fill="none" stroke="#404040" /></svg>
            </div>
          ))}
        </div>
        {tabs.map((tab) => (
          <div key={tab.t} className={`relative flex ${tab.w} shrink-0 items-center justify-center border-b border-black bg-[#f7f7f7] text-[12.200px] leading-none`}>
            <svg viewBox="0 0 8 17" className="absolute left-0 top-0 h-[17px] w-[8px]">
              <path d="M1 0l6 17" stroke="#000" fill="none" />
            </svg>
            {tab.t}
          </div>
        ))}
        <div className="relative flex w-[85px] shrink-0 items-center justify-center bg-white text-[12.200px] font-bold leading-none">
          <svg viewBox="0 0 8 17" className="absolute left-0 top-0 h-[17px] w-[8px]">
            <path d="M1 0l6 17" stroke="#000" fill="none" />
          </svg>
          SP500 Sito
          <svg viewBox="0 0 8 17" className="absolute right-0 top-0 h-[17px] w-[8px]">
            <path d="M7 0L1 17" stroke="#000" fill="none" />
          </svg>
        </div>
        <div className="flex-1 border-b border-[#a0a0a0]" />
      </div>

      {/* status bar */}
      <div className="flex h-[19px] shrink-0 items-center whitespace-nowrap bg-[#f0eeee] pt-[2px] text-[14px] leading-none">
        <span className="flex-1 pl-[2px]">For Help, press F1</span>
        <span className="w-[48px]">Acct:</span>
        {status.map((s) => (
          <span key={s.t} className={`${s.w} flex h-full items-center border-l border-[#cfcfcf] pl-[4px] ${s.c}`}>{s.t}</span>
        ))}
        <div className="flex h-full w-[19px] items-center justify-center border-l border-[#cfcfcf]">
          <div className="h-[10px] w-[10px] rounded-full bg-[radial-gradient(circle_at_35%_30%,#ff8080,#e00000_55%,#800000)]" />
        </div>
        <span className="flex h-full w-[124px] items-center border-l border-[#cfcfcf] pl-[4px]">09/05/2023 14:16</span>
      </div>
      <div className="h-[2px] shrink-0 bg-[#2c3e52]" />
    </div>
  );
}
